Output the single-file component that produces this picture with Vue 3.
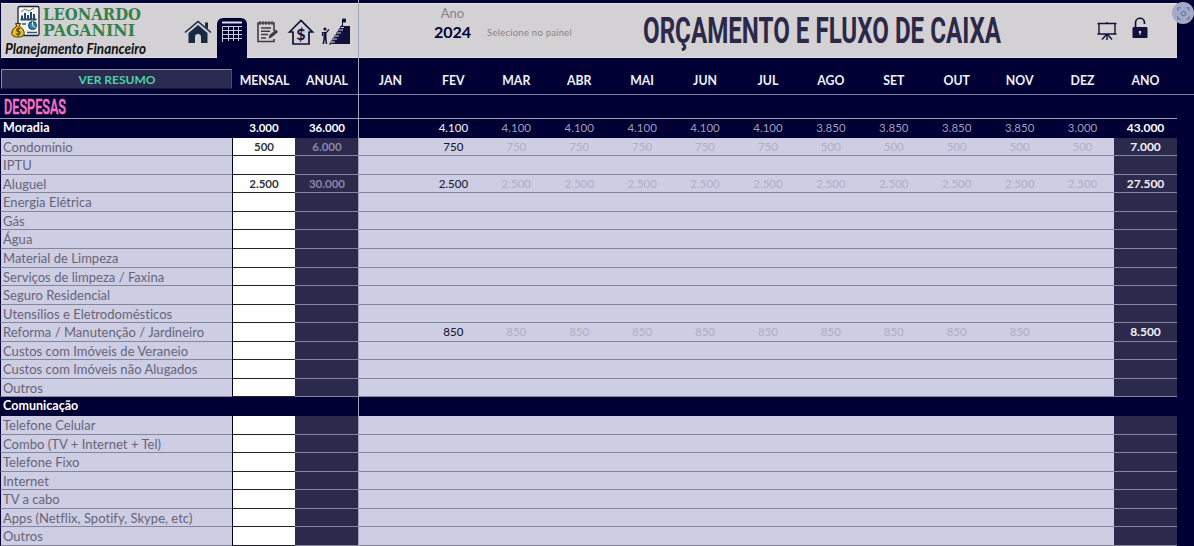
<template>
  <div class="sheet">
    <header class="banner">
      <div class="brand">
        <svg class="brand-icon" viewBox="0 0 30 33">
          <rect x="7" y="1.500" width="21" height="29" rx="1.500" fill="#f4f4f0" stroke="#1c2430" stroke-width="1.300" />
          <path d="M9.500 14.500h16M11 14V10.500M14 14V8M17 14V10M20 14V7M23 14V9" stroke="#24466a" stroke-width="2" fill="none" />
          <path d="M10 7l4-3 4 2 5-3" stroke="#777" fill="none" />
          <circle cx="21.500" cy="20.500" r="4" fill="#2389b8" stroke="#17354d" />
          <path d="M21.500 20.500V16.500M21.500 20.500l3 2" stroke="#d8f0f4" />
          <path d="M11 19h4M16 27.500h10" stroke="#33566e" stroke-width="1.300" />
          <path d="M4.500 18.500h5l-1.300 2.700c3 1.500 5 4 5 7 0 2.500-2 3.800-6.200 3.800S.8 30.700.8 28.200c0-3 2-5.500 5-7z" fill="#eebb22" stroke="#3b3115" />
          <text x="7" y="30" class="coin">$</text>
        </svg>
        <svg class="brand-name" viewBox="0 0 104 36">
          <text x="0" y="16.200" textLength="98" lengthAdjust="spacingAndGlyphs">LEONARDO</text>
          <text x="0" y="32.400" textLength="92" lengthAdjust="spacingAndGlyphs">PAGANINI</text>
        </svg>
        <svg class="brand-tag" viewBox="0 0 150 20">
          <text x="1" y="14" textLength="141" lengthAdjust="spacingAndGlyphs">Planejamento Financeiro</text>
        </svg>
      </div>

      <nav class="tools">
        <!-- início -->
        <svg class="tool" viewBox="0 0 30 26">
          <path d="M2 13.500L15 2.500l13 11" fill="none" stroke="#1c2b3c" stroke-width="1.600" />
          <path d="M22 3.500h3V10l-3-2.500z" fill="#1c2b3c" />
          <path d="M5.500 14L15 6l9.500 8v10H18v-6a3 3 0 0 0-6 0v6H5.500z" fill="#162a44" />
        </svg>
        <!-- planilha (aba ativa) -->
        <div class="tab">
          <svg viewBox="0 0 22 22">
            <path d="M1 1.500h20" stroke="#dcdce8" stroke-width="2" />
            <path d="M1.500 21V5.500H21M1.500 9.500H21M1.500 13.500H21M1.500 17.500H21M7.500 5v15M12.500 5v15M17.500 5v15" fill="none" stroke="#c8c8da" />
          </svg>
        </div>
        <!-- anotações -->
        <svg class="tool note" viewBox="0 0 24 24">
          <path d="M18 11V3H2v18.500h16V19" fill="none" stroke="#3c3c40" stroke-width="1.600" />
          <path d="M4 1v4M7 1v4M10 1v4M13 1v4M16 1v4" stroke="#3c3c40" stroke-width="1.200" />
          <path d="M5 8h10M5 11.300h9M5 14.600h7M5 18h5" stroke="#3c3c40" stroke-width="1.500" />
          <path d="M12.500 18.500l1-3.500 6.500-5.500 2 2.500-6.500 5.500z" fill="#3c3c40" />
        </svg>
        <!-- patrimônio -->
        <svg class="tool money" viewBox="0 0 28 28">
          <path d="M2.500 14L14 2.500l11.500 11.500H22v12H6V14z" fill="none" stroke="#10103a" stroke-width="1.700" />
          <text x="14" y="22" class="dollar">$</text>
        </svg>
        <!-- metas -->
        <svg class="tool goal" viewBox="0 0 30 28">
          <path d="M10 27l10-18h9v18z" fill="#10103a" />
          <path d="M8 27h2v-3h2v-3h2v-3h2v-3h2v-3h2V9h2" fill="none" stroke="#10103a" />
          <path d="M10 25h4M12 22h4M14 19h4M16 16h4M18 13h4M20 10.500h3" stroke="#d4d1d5" stroke-width="1.200" />
          <path d="M21.500 9V2h3v3h-3" fill="#10103a" stroke="#10103a" />
          <circle cx="4" cy="12" r="1.600" fill="#10103a" />
          <path d="M1.500 19v-3.500h4L8 12.500" fill="none" stroke="#10103a" stroke-width="1.200" />
          <path d="M2.500 15h3v6l.7 6H4.700L4 22l-1 5H1.500l1-6z" fill="#10103a" />
        </svg>
      </nav>

      <div class="year">
        <span class="year-label">Ano</span>
        <span class="year-value">2024</span>
      </div>
      <span class="hint">Selecione no painel</span>

      <svg class="title" viewBox="0 0 360 42">
        <text x="0" y="31" textLength="358" lengthAdjust="spacingAndGlyphs">ORÇAMENTO E FLUXO DE CAIXA</text>
      </svg>

      <svg class="board" viewBox="0 0 20 20">
        <path d="M.5 2.500h19M2 2.500v10.500h16V2.500M.5 13h19M10 13v6M9 14l-4 4.500M11 14l4 4.500M10 1v1.500" fill="none" stroke="#10103a" stroke-width="1.400" />
      </svg>
      <svg class="lock" viewBox="0 0 16 22">
        <path d="M3.500 10V6a4.500 4.500 0 0 1 9-.5V7" fill="none" stroke="#10103a" stroke-width="1.700" />
        <rect x=".5" y="10" width="15" height="11" rx="1" fill="#10103a" />
        <circle cx="8" cy="15" r="1.300" fill="#d4d1d5" />
        <path d="M8 15v3" stroke="#d4d1d5" />
      </svg>
    </header>

    <div class="row heads">
      <button class="summary">VER RESUMO</button>
      <span v-for="h in heads" :key="h">{{ h }}</span>
    </div>

    <div class="section">
      <svg viewBox="0 0 70 22">
        <text x="0" y="18" textLength="62" lengthAdjust="spacingAndGlyphs">DESPESAS</text>
      </svg>
    </div>

    <div class="body">
      <div v-for="(r, i) in rows" :key="i" class="row line" :class="{ group: r.group }">
        <span class="name">{{ r.name }}</span>
        <span class="monthly">{{ r.monthly }}</span>
        <span class="yearly">{{ r.yearly }}</span>
        <span v-for="(m, j) in months" :key="m" class="month" :class="{ first: j === 1 }">{{ r.values?.[j] }}</span>
        <span class="total">{{ r.total }}</span>
      </div>
    </div>

    <div class="freeze"></div>
    <div class="lens">
      <svg viewBox="0 0 14 14">
        <path d="M1 4V1h3M10 1h3v3M13 10v3h-3M4 13H1v-3" fill="none" stroke="#4c86b5" stroke-width="1.400" />
        <circle cx="7" cy="7" r="2.300" fill="none" stroke="#4c86b5" stroke-width="1.300" />
      </svg>
    </div>
  </div>
</template>

<script setup>
const months = ['JAN', 'FEV', 'MAR', 'ABR', 'MAI', 'JUN', 'JUL', 'AGO', 'SET', 'OUT', 'NOV', 'DEZ']
const heads = ['MENSAL', 'ANUAL', ...months, 'ANO']

// repete o valor n vezes, para preencher meses seguidos
const rep = (value, n) => Array(n).fill(value)

const rows = [
  { name: 'Moradia', group: true, monthly: '3.000', yearly: '36.000', values: ['', ...rep('4.100', 6), ...rep('3.850', 4), '3.000'], total: '43.000' },
  { name: 'Condomínio', monthly: '500', yearly: '6.000', values: ['', ...rep('750', 6), ...rep('500', 5)], total: '7.000' },
  { name: 'IPTU' },
  { name: 'Aluguel', monthly: '2.500', yearly: '30.000', values: ['', ...rep('2.500', 11)], total: '27.500' },
  { name: 'Energia Elétrica' },
  { name: 'Gás' },
  { name: 'Água' },
  { name: 'Material de Limpeza' },
  { name: 'Serviços de limpeza / Faxina' },
  { name: 'Seguro Residencial' },
  { name: 'Utensílios e Eletrodomésticos' },
  { name: 'Reforma / Manutenção / Jardineiro', values: ['', ...rep('850', 10), ''], total: '8.500' },
  { name: 'Custos com Imóveis de Veraneio' },
  { name: 'Custos com Imóveis não Alugados' },
  { name: 'Outros' },
  { name: 'Comunicação', group: true },
  { name: 'Telefone Celular' },
  { name: 'Combo (TV + Internet + Tel)' },
  { name: 'Telefone Fixo' },
  { name: 'Internet' },
  { name: 'TV a cabo' },
  { name: 'Apps (Netflix, Spotify, Skype, etc)' },
  { name: 'Outros' },
]
</script>

<style>
body {
  background: #000035;
}
</style>

<style scoped>
.sheet {
  position: relative;
  box-sizing: border-box;
  width: 1194px;
  height: 546px;
  padding-top: 3px;
  overflow: hidden;
  background: #000035;
  font-family: Lato, "Open Sans", sans-serif;
  font-variant-ligatures: none;
}
.banner {
  display: flex;
  box-sizing: border-box;
  width: 1176px;
  height: 55px;
  margin-left: 1px;
  background: #d4d1d5;
  border-top: 1px solid #e6e4ee;
  border-bottom: 1px solid #e6e4f2;
}
.banner svg,
.section svg {
  overflow: visible;
}
.brand {
  display: grid;
  grid-template-columns: 31px 104px;
  grid-template-rows: 36px 18px;
  column-gap: 1px;
  width: 172px;
  padding-left: 10px;
  box-sizing: border-box;
}
.brand-icon {
  width: 30px;
  height: 33px;
  margin-top: 1px;
}
.coin {
  font: bold 9px Lato, sans-serif;
  text-anchor: middle;
  fill: #4a3a08;
}
.brand-name {
  width: 104px;
  height: 36px;
}
.brand-name text {
  font: bold 17.5px "DejaVu Serif", serif;
  fill: #35804a;
}
.brand-tag {
  grid-column: 1 / 3;
  width: 150px;
  height: 20px;
  margin-left: -7px;
}
.brand-tag text {
  font: italic bold 15px Lato, sans-serif;
  fill: #111;
}
.tools {
  display: flex;
  width: 185px;
}
.tool {
  flex: none;
  width: 30px;
  height: 26px;
  margin: 15px 0 0 10px;
}
.tab {
  width: 30px;
  height: 41px;
  margin: 14px 0 0 4px;
  background: #000035;
  border-radius: 6px 6px 0 0;
  text-align: center;
}
.tab svg {
  width: 22px;
  height: 22px;
  margin-top: 3px;
}
.tool.note {
  width: 24px;
  height: 24px;
  margin: 16px 0 0 9px;
}
.tool.money {
  width: 28px;
  height: 28px;
  margin: 14px 0 0 7px;
}
.tool.goal {
  height: 28px;
  margin: 13px 0 0 6px;
}
.dollar {
  font: bold 16px Lato, sans-serif;
  text-anchor: middle;
  fill: #10103a;
}
.year {
  display: flex;
  flex-direction: column;
  align-items: center;
  width: 63px;
  margin-left: 63px;
  padding-top: 1px;
}
.year-label {
  font-size: 13px;
  line-height: 17px;
  letter-spacing: 0.1px;
  color: #85828a;
}
.year-value {
  font-size: 16px;
  font-weight: bold;
  line-height: 20px;
  color: #000035;
}
.hint {
  width: 100px;
  margin: 22px 0 0 3px;
  font-size: 9.5px;
  line-height: 14px;
  letter-spacing: 0.25px;
  white-space: nowrap;
  color: #85828a;
}
.title {
  width: 360px;
  height: 42px;
  margin: 8px 0 0 56px;
}
.title text {
  font: bold 36px Roboto, sans-serif;
  fill: #2b2848;
}
.board {
  width: 20px;
  height: 20px;
  margin: 17px 0 0 94px;
}
.lock {
  width: 16px;
  height: 22px;
  margin: 13px 0 0 15px;
}
.row {
  display: grid;
  grid-template-columns: 232px 63px 64px repeat(12, minmax(0, 1fr)) 63px;
  width: 1177px;
}
.heads {
  height: 36px;
  box-sizing: border-box;
  padding-top: 10px;
  font-size: 12.3px;
  font-weight: bold;
  line-height: 25px;
  text-align: center;
  color: #f0f0fa;
}
.heads span:nth-child(2) {
  padding-left: 2px;
}
.summary {
  height: 20px;
  margin: 1px 0 0 1px;
  padding: 1px 0 0 1px;
  border: 1px solid #8d8da8;
  border-right-color: #4b4b6b;
  border-bottom-color: #15153d;
  background: #2b2a50;
  font: bold 12px/18px Lato, sans-serif;
  color: #4fd0a8;
}
.section {
  box-sizing: border-box;
  width: 1194px;
  height: 24px;
  border-top: 1px solid #7f7f9f;
}
.section svg {
  display: block;
  width: 70px;
  height: 22px;
  margin: 1px 0 0 4px;
}
.section text {
  font: 500 21px Roboto, sans-serif;
  fill: #f274c0;
  stroke: #f274c0;
  stroke-width: 0.6px;
}
.body {
  width: 1177px;
  border-top: 1px solid #9c9cb4;
}
.line {
  height: 18.565px;
  font-size: 11.5px;
  line-height: 18px;
  text-align: center;
  color: #b0afc2;
}
.line > span {
  box-sizing: border-box;
  overflow: hidden;
  white-space: nowrap;
  border-bottom: 1px solid #85859b;
  background: #cdcde4;
}
.line > .name {
  padding-left: 2px;
  border-left: 1px solid #000035;
  font-size: 13px;
  letter-spacing: 0.03px;
  text-align: left;
  color: #666577;
}
.line > .monthly {
  border-left: 1px solid #000020;
  border-bottom-color: #222228;
  background: #fff;
  font-weight: bold;
  color: #34343c;
}
.line > .yearly {
  background: #2b2a4c;
  font-weight: bold;
  color: #8988a8;
}
.line > .first {
  font-weight: 500;
  color: #1a1a33;
}
.line > .total {
  background: #2b2a4c;
  font-size: 12px;
  font-weight: bold;
  color: #f2f2fa;
}
.group > span,
.group > .name,
.group > .monthly,
.group > .yearly,
.group > .total {
  border-color: #000035;
  background: #000035;
  color: #fff;
}
.group > .name {
  font-size: 12.5px;
  font-weight: bold;
}
.group > .month {
  color: #9f9fb8;
}
.group > .first {
  color: #e8e8f4;
}
/* linha do painel congelado */
.freeze {
  position: absolute;
  top: 0;
  left: 358px;
  width: 1px;
  height: 546px;
  background: #a3a3b8;
}
.lens {
  position: absolute;
  top: 2px;
  left: 1172px;
  display: flex;
  align-items: center;
  justify-content: center;
  width: 22px;
  height: 22px;
  border-radius: 50%;
  background: #a8a8c4;
}
.lens svg {
  width: 13px;
  height: 13px;
}
</style>
